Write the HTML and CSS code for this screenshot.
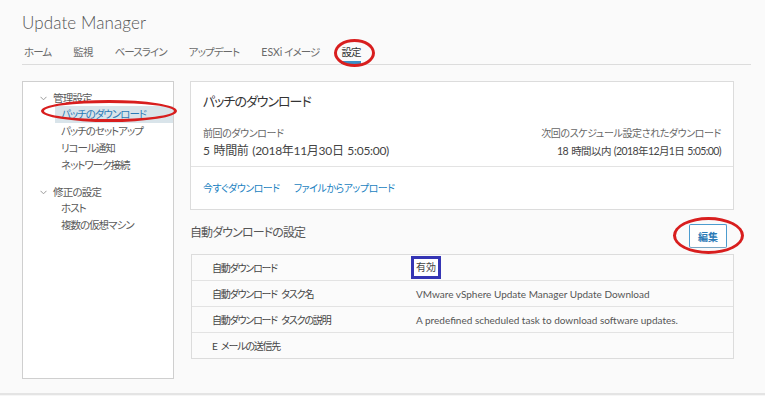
FILE: index.html
```html
<!DOCTYPE html>
<html lang="ja">
<head>
<meta charset="utf-8">
<title>Update Manager</title>
<link rel="stylesheet" href="styles.css">
</head>
<body>
<div class="page">
  <h1 class="title">Update Manager</h1>
  <nav class="tabs">
    <span class="tab">ホーム</span>
    <span class="tab">監視</span>
    <span class="tab">ベースライン</span>
    <span class="tab">アップデート</span>
    <span class="tab"><span class="latin">ESXi</span> イメージ</span>
    <span class="tab active">設定<span class="mark mark-tab"></span></span>
  </nav>
  <div class="main">
    <aside class="sidebar">
      <div class="group">
        <div class="group-head"><svg class="chev" width="7" height="5" viewBox="0 0 7 5"><path d="M0.5 0.8 L3.5 3.8 L6.5 0.8" fill="none" stroke="#9a9a9a" stroke-width="1"/></svg>管理設定</div>
        <div class="item selected">パッチのダウンロード<span class="mark mark-side"></span></div>
        <div class="item">パッチのセットアップ</div>
        <div class="item">リコール通知</div>
        <div class="item">ネットワーク接続</div>
      </div>
      <div class="group group2">
        <div class="group-head"><svg class="chev" width="7" height="5" viewBox="0 0 7 5"><path d="M0.5 0.8 L3.5 3.8 L6.5 0.8" fill="none" stroke="#9a9a9a" stroke-width="1"/></svg>修正の設定</div>
        <div class="item">ホスト</div>
        <div class="item">複数の仮想マシン</div>
      </div>
    </aside>
    <section class="content">
      <div class="card">
        <div class="card-body">
          <div class="card-title">パッチのダウンロード</div>
          <div class="meta-row">
            <div class="meta">
              <div class="meta-label">前回のダウンロード</div>
              <div class="meta-value">5 時間前 (2018年11月30日 5:05:00)</div>
            </div>
            <div class="meta meta-right">
              <div class="meta-label">次回のスケジュール設定されたダウンロード</div>
              <div class="meta-value meta-value-small">18 時間以内 (2018年12月1日 5:05:00)</div>
            </div>
          </div>
        </div>
        <div class="card-footer">
          <a class="link">今すぐダウンロード</a>
          <a class="link">ファイルからアップロード</a>
        </div>
      </div>
      <div class="section-head">
        <div class="section-title">自動ダウンロードの設定</div>
        <button class="btn">編集<span class="mark mark-btn"></span></button>
      </div>
      <div class="table">
        <div class="row">
          <div class="cell-label">自動ダウンロード</div>
          <div class="cell-value"><span class="badge">有効</span></div>
        </div>
        <div class="row">
          <div class="cell-label">自動ダウンロード タスク名</div>
          <div class="cell-value">VMware vSphere Update Manager Update Download</div>
        </div>
        <div class="row">
          <div class="cell-label">自動ダウンロード タスクの説明</div>
          <div class="cell-value">A predefined scheduled task to download software updates.</div>
        </div>
        <div class="row">
          <div class="cell-label">E メールの送信先</div>
          <div class="cell-value"></div>
        </div>
      </div>
    </section>
  </div>
</div>
<div class="statusbar"></div>
</body>
</html>
```

FILE: styles.css
```css
html, body {
  margin: 0;
  padding: 0;
}
body {
  background: #fafafa;
  width: 765px;
  height: 396px;
  overflow: hidden;
  font-family: "Lato", "Noto Sans CJK JP", sans-serif;
  font-feature-settings: "palt";
  color: #565656;
}
.page {
  padding: 11px 14px 0 22px;
}
.title {
  margin: 0;
  font-size: 17px;
  line-height: 23px;
  font-weight: 300;
  color: #555;
  letter-spacing: 0.1px;
}
.tabs {
  display: flex;
  gap: 22px;
  padding-left: 2px;
  border-bottom: 1px solid #dcdcdc;
  height: 30px;
}
.tab {
  position: relative;
  font-size: 10.5px;
  letter-spacing: -0.9px;
  line-height: 24px;
  padding-top: 6px;
  color: #6a6a6a;
}
.latin {
  letter-spacing: 0;
}
.tab.active {
  color: #333;
  box-shadow: inset 0 -3px 0 #3a8fc7;
}
.mark {
  position: absolute;
  border: 3px solid #d81e1e;
  border-radius: 50%;
  box-sizing: border-box;
  pointer-events: none;
}
.mark-tab {
  left: -7px;
  top: 5px;
  width: 41px;
  height: 28px;
}
.main {
  display: flex;
  gap: 16px;
  margin-top: 16px;
}
.sidebar {
  width: 152px;
  height: 298px;
  box-sizing: border-box;
  background: #fff;
  border: 1px solid #cfcfcf;
  padding-top: 8px;
  flex: none;
}
.group-head {
  display: flex;
  align-items: center;
  padding-left: 17px;
  font-size: 10.5px;
  letter-spacing: -0.8px;
  line-height: 16px;
  color: #5a5a5a;
}
.chev {
  margin-right: 6px;
  flex: none;
}
.item {
  position: relative;
  font-size: 10.5px;
  letter-spacing: -1px;
  line-height: 17px;
  padding-left: 38px;
  color: #5a5a5a;
}
.item.selected {
  background: #d9e4ea;
  color: #2c7bb6;
  margin-left: 32px;
  padding-left: 6px;
}
.mark-side {
  left: -14px;
  top: -6px;
  width: 136px;
  height: 22px;
}
.group2 {
  margin-top: 10px;
}
.content {
  width: 544px;
  flex: none;
}
.card {
  background: #fff;
  border: 1px solid #dcdcdc;
  height: 129px;
  box-sizing: border-box;
}
.card-body {
  padding: 9px 12px 6px;
  border-bottom: 1px solid #e3e3e3;
}
.card-title {
  font-size: 13px;
  letter-spacing: -1px;
  line-height: 20px;
  color: #333;
}
.meta-row {
  display: flex;
  justify-content: space-between;
  margin-top: 15px;
}
.meta-right {
  text-align: right;
}
.meta-label {
  font-size: 10px;
  letter-spacing: -0.4px;
  line-height: 14px;
  color: #666;
}
.meta-value {
  font-size: 12px;
  letter-spacing: -0.3px;
  word-spacing: 1px;
  line-height: 18px;
  margin-top: 2px;
  color: #444;
}
.meta-value-small {
  font-size: 10.5px;
  letter-spacing: -0.6px;
}
.card-footer {
  display: flex;
  gap: 14px;
  padding: 14px 12px 0;
}
.link {
  font-size: 10px;
  letter-spacing: -0.5px;
  line-height: 14px;
  color: #1a7fbf;
  text-decoration: none;
}
.section-head {
  display: flex;
  justify-content: space-between;
  align-items: flex-start;
  margin-top: 14px;
  height: 24px;
}
.section-title {
  font-size: 12px;
  letter-spacing: -0.9px;
  line-height: 18px;
  color: #565656;
}
.btn {
  position: relative;
  margin-right: 7px;
  width: 38px;
  height: 24px;
  padding: 0;
  background: #fff;
  border: 1px solid #4c9ccf;
  border-bottom-color: #7aa7c4;
  border-radius: 2px;
  font-family: "Lato", "Noto Sans CJK JP", sans-serif;
  font-size: 10px;
  font-weight: 700;
  color: #2c7bb6;
}
.mark-btn {
  left: -17px;
  top: -8px;
  width: 71px;
  height: 37px;
}
.table {
  margin-top: 6px;
  margin-left: 1px;
  border: 1px solid #dcdcdc;
  background: #fbfbfb;
}
.row {
  display: flex;
  align-items: center;
  height: 25px;
  border-bottom: 1px solid #e3e3e3;
}
.row:last-child {
  border-bottom: none;
}
.cell-label {
  width: 204px;
  padding-left: 20px;
  font-size: 10px;
  letter-spacing: -1.2px;
  word-spacing: 3px;
  color: #444;
  flex: none;
}
.cell-value {
  font-size: 10px;
  color: #555;
}
.badge {
  display: inline-block;
  margin-left: -5px;
  padding: 0 2px;
  border: 3px solid #3535b4;
  background: #fff;
  font-size: 10px;
  line-height: 17px;
  color: #444;
}
.statusbar {
  margin-top: 14px;
  border-top: 2px solid #e4e4e4;
  height: 10px;
  background: #f6f6f6;
}
```
